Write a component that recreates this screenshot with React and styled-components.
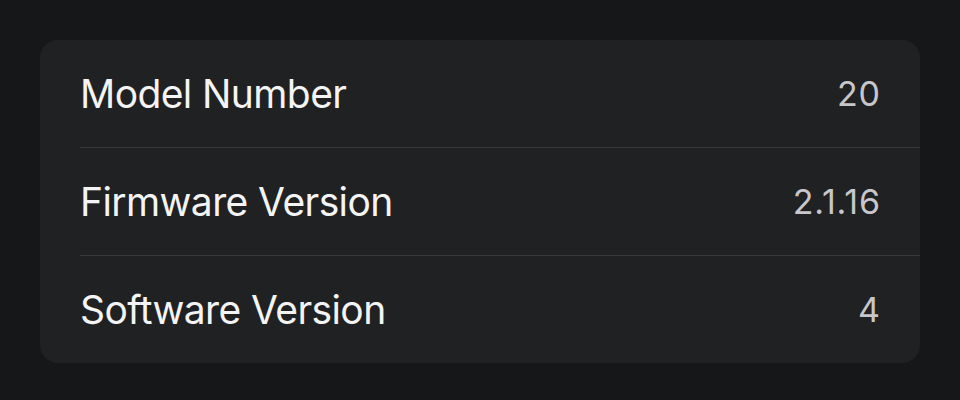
import React from "react";
import styled, { createGlobalStyle } from "styled-components";

const Global = createGlobalStyle`
  html, body { margin: 0; padding: 0; background: #161718; }
  body { font-family: Inter, "Noto Sans", sans-serif; }
`;

const Page = styled.div`
  padding: 40px;
  background: #161718;
  min-height: 400px;
  box-sizing: border-box;
`;

const Card = styled.div`
  background: #202123;
  border-radius: 18px;
  padding-left: 40px;
  overflow: hidden;
`;

const Row = styled.div`
  display: flex;
  align-items: center;
  justify-content: space-between;
  height: ${(p) => (p.$last ? "107px" : "108px")};
  padding-right: 40px;
  box-sizing: border-box;
  border-bottom: ${(p) => (p.$last ? "none" : "1px solid #38393b")};
`;

const Label = styled.span`
  color: #f4f4f5;
  font-size: 39px;
  font-weight: 400;
  letter-spacing: -0.6px;
  line-height: 1;
`;

const Value = styled.span`
  color: #c7c7cb;
  font-size: 34px;
  font-weight: 400;
  letter-spacing: 0.8px;
  margin-right: -0.8px;
  line-height: 1;
`;

const rows = [
  ["Model Number", "20"],
  ["Firmware Version", "2.1.16"],
  ["Software Version", "4"],
];

export default function App() {
  return (
    <>
      <Global />
      <Page>
        <Card>
          {rows.map(([l, v], i) => (
            <Row key={l} $last={i === rows.length - 1}>
              <Label>{l}</Label>
              <Value>{v}</Value>
            </Row>
          ))}
        </Card>
      </Page>
    </>
  );
}
